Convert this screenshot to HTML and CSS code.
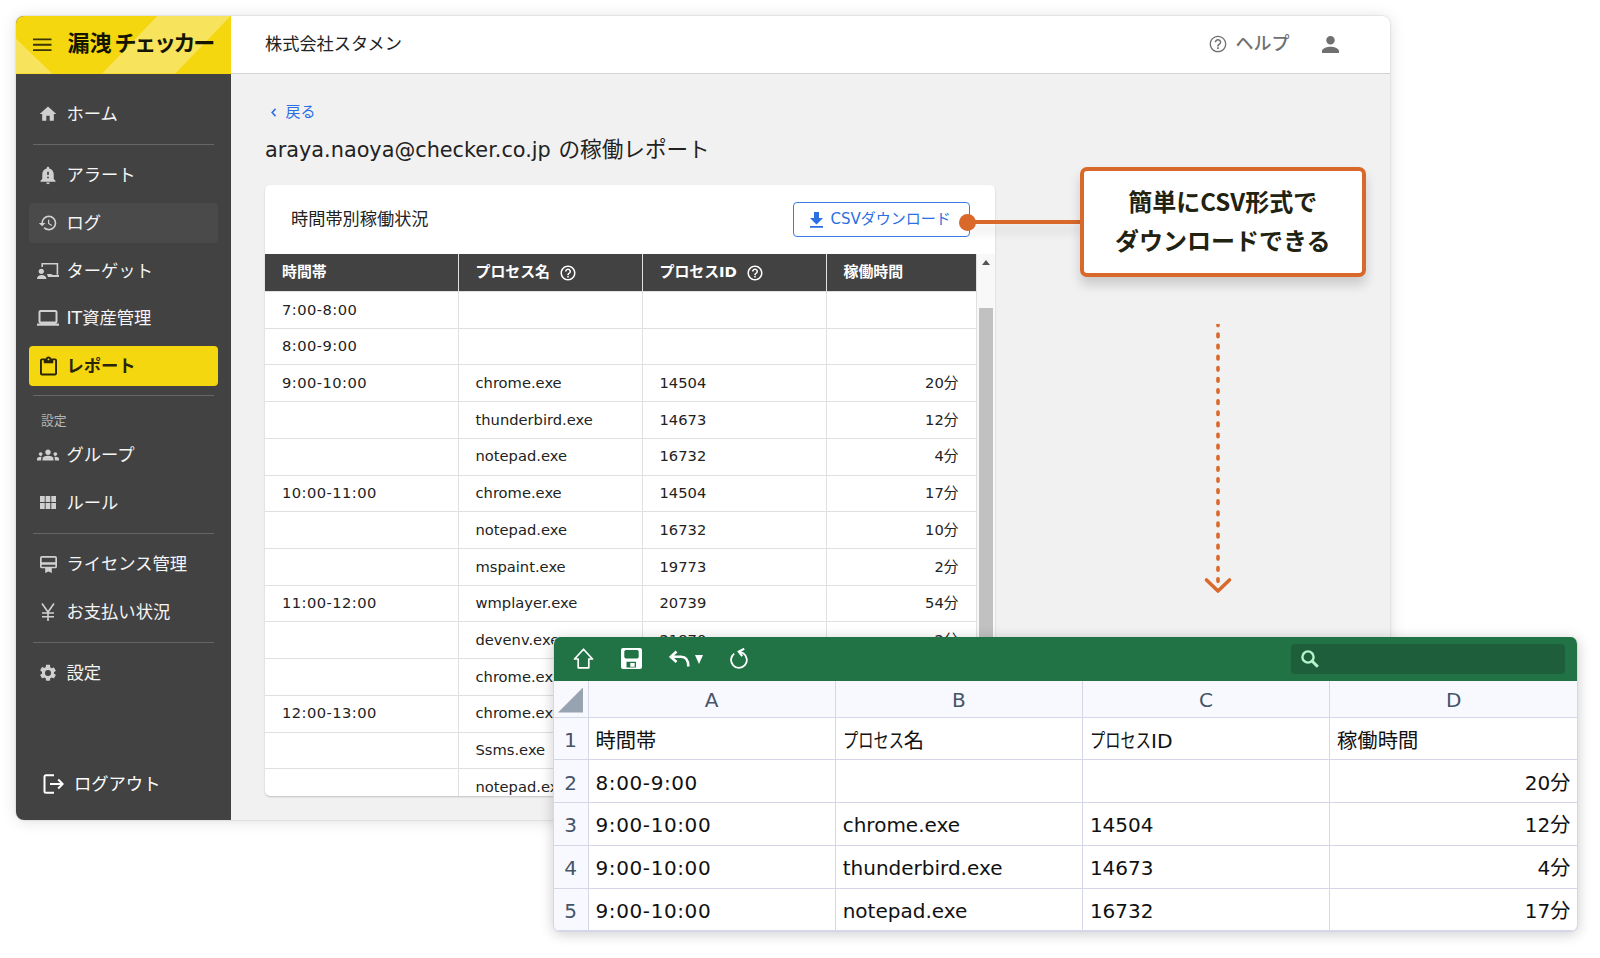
FILE: index.html
```html
<!DOCTYPE html>
<html lang="ja">
<head>
    <meta charset="UTF-8">
    <title>漏洩チェッカー</title>
    <link rel="stylesheet" href="styles.css">
</head>
<body>
    <!-- App window -->
    <div class="app">
        <aside class="sidebar">
            <div class="brand">
                <svg class="brand-bg" viewBox="0 0 214 58" preserveAspectRatio="none">
                    <path d="M0 23L36 58H0zM141 0H214L159 58H86z" fill="#f7e35c"/>
                </svg>
                <svg class="menu-icon" viewBox="0 0 18 13"><path d="M0 1.2h18M0 6.5h18M0 11.8h18" stroke="#3a3606" stroke-width="1.8"/></svg>
                <span class="brand-name">漏洩<span class="brand-kana">チェッカー</span></span>
            </div>

            <nav class="menu">
                <a class="menu-item"><svg class="icon" viewBox="0 0 24 24"><path d="M10 20v-6h4v6h5v-8h3L12 3 2 12h3v8z"/></svg>ホーム</a>
                <hr class="line">
                <a class="menu-item"><svg class="icon" viewBox="0 0 24 24"><path d="M10.01 21.01c0 1.1.89 1.99 1.99 1.99s1.99-.89 1.99-1.99h-3.98zM18.88 16.82V11c0-3.25-2.25-5.97-5.29-6.69v-.72C13.59 2.71 12.88 2 12 2s-1.59.71-1.59 1.59v.72C7.37 5.03 5.12 7.75 5.12 11v5.82L3 18.94V20h18v-1.06l-2.12-2.12zM13 16.01h-2v-2h2v2zm0-4h-2V8h2v4.01z"/></svg>アラート</a>
                <a class="menu-item hovered"><svg class="icon" viewBox="0 0 24 24"><path d="M13 3a9 9 0 0 0-9 9H1l3.89 3.89.07.14L9 12H6c0-3.87 3.13-7 7-7s7 3.13 7 7-3.13 7-7 7c-1.93 0-3.68-.79-4.94-2.06l-1.42 1.42A8.954 8.954 0 0 0 13 21a9 9 0 0 0 0-18zm-1 5v5l4.28 2.54.72-1.21-3.5-2.08V8z"/></svg>ログ</a>
                <a class="menu-item"><svg class="icon icon-wide" viewBox="0 0 22 17"><path d="M5.2 4.500V1.200h15.200v11" fill="none" stroke="#d0d0d0" stroke-width="1.6"/><circle cx="4.3" cy="8.800" r="2.6"/><path d="M0 16.500c0-2.700 2-4 4.700-4s4.700 1.300 4.700 4zM10 11.500h4l2 .9h6v2.200H11z"/></svg>ターゲット</a>
                <a class="menu-item"><svg class="icon icon-wide" viewBox="0 0 22 17"><path d="M18.500 14a2 2 0 0 0 2-2V2.500a2 2 0 0 0-2-2h-15a2 2 0 0 0-2 2V12c0 1.100.9 2 2 2H0v2.200h22V14zM3.500 2.500h15V12h-15z"/></svg>IT資産管理</a>
                <a class="menu-item active"><svg class="icon icon-clip" viewBox="3 1 18 20"><path d="M19 3h-4.180C14.400 1.840 13.300 1 12 1s-2.400.84-2.820 2H5c-1.100 0-2 .9-2 2v14c0 1.100.9 2 2 2h14c1.100 0 2-.9 2-2V5c0-1.100-.9-2-2-2zm-7 0c.55 0 1 .45 1 1s-.45 1-1 1-1-.45-1-1 .45-1 1-1zm7 16H5V5h2v3h10V5h2v14z"/></svg>レポート</a>
                <hr class="line line-group">
                <p class="menu-label">設定</p>
                <a class="menu-item"><svg class="icon icon-wide" viewBox="0 5 24 14"><path d="M12 12.750c1.630 0 3.070.39 4.240.9 1.080.48 1.760 1.560 1.760 2.730V18H6v-1.610c0-1.180.68-2.260 1.760-2.730 1.170-.52 2.610-.91 4.240-.91zM4 13c1.100 0 2-.9 2-2s-.9-2-2-2-2 .9-2 2 .9 2 2 2zm1.130 1.100C4.760 14.040 4.390 14 4 14c-.99 0-1.930.21-2.780.58A2.010 2.010 0 0 0 0 16.430V18h4.500v-1.610c0-.83.23-1.610.63-2.290zM20 13c1.100 0 2-.9 2-2s-.9-2-2-2-2 .9-2 2 .9 2 2 2zm4 3.430c0-.81-.48-1.530-1.220-1.850A6.950 6.950 0 0 0 20 14c-.39 0-.76.04-1.130.1.4.68.63 1.460.63 2.290V18H24v-1.570zM12 6c1.660 0 3 1.340 3 3s-1.340 3-3 3-3-1.340-3-3 1.340-3 3-3z"/></svg>グループ</a>
                <a class="menu-item"><svg class="icon icon-grid" viewBox="0 0 16 13"><path d="M0 0h4.700v6H0zM5.600 0h4.700v6H5.600zM11.300 0H16v6h-4.700zM0 7h4.700v6H0zM5.600 7h4.700v6H5.600zM11.300 7H16v6h-4.700z"/></svg>ルール</a>
                <hr class="line">
                <a class="menu-item"><svg class="icon icon-card" viewBox="0 0 18 18"><path d="M2 0h14a2 2 0 0 1 2 2v9a2 2 0 0 1-2 2h-3.500v5L9 16.300 5.500 18v-5H2a2 2 0 0 1-2-2V2a2 2 0 0 1 2-2zm-.2 1.800v4.700h14.400V1.800zm0 7.500v2h14.400v-2z"/></svg>ライセンス管理</a>
                <a class="menu-item"><svg class="icon icon-yen" viewBox="0 0 14 18"><path d="M1 .5l6 8.500 6-8.500M7 9v9M1 10h12M1 13.800h12" fill="none" stroke="#d0d0d0" stroke-width="1.600"/></svg>お支払い状況</a>
                <hr class="line">
                <a class="menu-item"><svg class="icon" viewBox="0 0 24 24"><path d="M19.140 12.940c.04-.3.060-.61.060-.94 0-.32-.02-.64-.07-.94l2.030-1.580c.18-.14.23-.41.12-.61l-1.920-3.320c-.12-.22-.37-.29-.59-.22l-2.390.96c-.5-.38-1.030-.7-1.620-.94l-.36-2.540A.484.484 0 0 0 13.920 2h-3.840c-.24 0-.43.17-.47.41l-.36 2.540c-.59.24-1.130.57-1.620.94l-2.390-.96c-.22-.08-.47 0-.59.22L2.740 8.470c-.12.21-.08.47.12.61l2.030 1.580c-.05.3-.09.63-.09.94s.02.64.07.94l-2.030 1.580c-.18.14-.23.41-.12.61l1.920 3.320c.12.22.37.29.59.22l2.390-.96c.5.38 1.030.7 1.620.94l.36 2.540c.05.24.24.41.48.41h3.840c.24 0 .44-.17.47-.41l.36-2.540c.59-.24 1.130-.56 1.620-.94l2.390.96c.22.080.47 0 .59-.22l1.920-3.320c.12-.22.07-.47-.12-.61l-2.010-1.580zM12 15.600A3.600 3.600 0 1 1 12 8.400a3.600 3.600 0 0 1 0 7.200z"/></svg>設定</a>
            </nav>

            <a class="logout"><svg viewBox="0 0 21 20"><path d="M11 1.200H3a1.500 1.500 0 0 0-1.500 1.500v14.600A1.500 1.500 0 0 0 3 18.800h8M7 10h12.500M15.200 5.500l4.500 4.500-4.500 4.500" fill="none" stroke="#fff" stroke-width="2"/></svg>ログアウト</a>
        </aside>

        <div class="content">
            <header class="topbar">
                <span class="company">株式会社スタメン</span>
                <span class="help">
                    <svg viewBox="0 0 24 24"><path d="M11 18h2v-2h-2v2zm1-16C6.480 2 2 6.480 2 12s4.480 10 10 10 10-4.480 10-10S17.520 2 12 2zm0 18.400c-4.600 0-8.400-3.800-8.400-8.400S7.400 3.600 12 3.600s8.400 3.800 8.400 8.400-3.800 8.400-8.400 8.400zM12 6c-2.210 0-4 1.790-4 4h1.800c0-1.100 1.100-2.200 2.200-2.200s2.200 1 2.200 2.200c0 2-3.100 1.750-3.100 5h1.800c0-2.250 3.100-2.500 3.100-5 0-2.210-1.790-4-4-4z"/></svg>
                    <span>ヘルプ</span>
                </span>
                <svg class="user" viewBox="4 4 16 16"><path d="M12 12c2.210 0 4-1.790 4-4s-1.790-4-4-4-4 1.790-4 4 1.790 4 4 4zm0 2c-2.670 0-8 1.340-8 4v2h16v-2c0-2.660-5.330-4-8-4z"/></svg>
            </header>

            <main class="page">
                <a class="back"><svg viewBox="0 0 6 10"><path d="M5 1L1.200 5 5 9" fill="none" stroke="#2b6fe3" stroke-width="1.700"/></svg>戻る</a>
                <h1 class="page-title"><span class="mail">araya.naoya@checker.co.jp</span>の稼働レポート</h1>

                <section class="panel">
                    <div class="panel-head">
                        <h2>時間帯別稼働状況</h2>
                        <button class="csv-button"><svg viewBox="0 0 13 16"><path d="M4 0h5v6h4l-6.500 6.500L0 6h4zM0 14h13v1.800H0z"/></svg>CSVダウンロード</button>
                    </div>
                    <div class="panel-body">
                        <div class="report">
                            <div class="row row-head">
                                <div>時間帯</div>
                                <div>プロセス名<svg viewBox="0 0 24 24"><path d="M11 18h2v-2h-2v2zm1-16C6.480 2 2 6.480 2 12s4.480 10 10 10 10-4.480 10-10S17.520 2 12 2zm0 18c-4.410 0-8-3.590-8-8s3.590-8 8-8 8 3.590 8 8-3.590 8-8 8zm0-14c-2.210 0-4 1.790-4 4h2c0-1.100.9-2 2-2s2 .9 2 2c0 2-3 1.750-3 5h2c0-2.250 3-2.500 3-5 0-2.210-1.790-4-4-4z"/></svg></div>
                                <div>プロセスID<svg viewBox="0 0 24 24"><path d="M11 18h2v-2h-2v2zm1-16C6.480 2 2 6.480 2 12s4.480 10 10 10 10-4.480 10-10S17.520 2 12 2zm0 18c-4.410 0-8-3.590-8-8s3.590-8 8-8 8 3.590 8 8-3.590 8-8 8zm0-14c-2.210 0-4 1.790-4 4h2c0-1.100.9-2 2-2s2 .9 2 2c0 2-3 1.750-3 5h2c0-2.250 3-2.500 3-5 0-2.210-1.790-4-4-4z"/></svg></div>
                                <div>稼働時間</div>
                            </div>
                            <div class="row"><div class="time">7:00-8:00</div><div></div><div></div><div></div></div>
                            <div class="row"><div class="time">8:00-9:00</div><div></div><div></div><div></div></div>
                            <div class="row"><div class="time">9:00-10:00</div><div>chrome.exe</div><div>14504</div><div>20分</div></div>
                            <div class="row"><div></div><div>thunderbird.exe</div><div>14673</div><div>12分</div></div>
                            <div class="row"><div></div><div>notepad.exe</div><div>16732</div><div>4分</div></div>
                            <div class="row"><div class="time">10:00-11:00</div><div>chrome.exe</div><div>14504</div><div>17分</div></div>
                            <div class="row"><div></div><div>notepad.exe</div><div>16732</div><div>10分</div></div>
                            <div class="row"><div></div><div>mspaint.exe</div><div>19773</div><div>2分</div></div>
                            <div class="row"><div class="time">11:00-12:00</div><div>wmplayer.exe</div><div>20739</div><div>54分</div></div>
                            <div class="row"><div></div><div>devenv.exe</div><div>21870</div><div>2分</div></div>
                            <div class="row"><div></div><div>chrome.exe</div><div></div><div></div></div>
                            <div class="row"><div class="time">12:00-13:00</div><div>chrome.exe</div><div></div><div></div></div>
                            <div class="row"><div></div><div>Ssms.exe</div><div></div><div></div></div>
                            <div class="row"><div></div><div>notepad.exe</div><div></div><div></div></div>
                        </div>
                        <div class="scrollbar"><span class="scroll-up"></span><span class="scroll-thumb"></span></div>
                    </div>
                </section>
            </main>
        </div>
    </div>

    <!-- Callout with pointer to the download button -->
    <div class="pointer"></div>
    <div class="callout">簡単にCSV形式で<br>ダウンロードできる</div>
    <svg class="flow-arrow" viewBox="0 0 30 272">
        <path d="M15 -1V258" stroke-width="3.600" stroke-dasharray="2.600 8.520"/>
        <path d="M3.500 256L15 267L26.500 256" stroke-width="3.600"/>
    </svg>

    <!-- Spreadsheet window -->
    <div class="sheet">
        <div class="toolbar">
            <svg class="tool-home" viewBox="0 0 21 21"><path d="M10.500 1.200L19.500 11h-3.700v8.800H5.200V11H1.500z" fill="none" stroke="#fff" stroke-width="1.700" stroke-linejoin="round"/></svg>
            <svg class="tool-save" viewBox="0 0 21 21"><path fill="#fff" fill-rule="evenodd" d="M2 0h17a2 2 0 0 1 2 2v17a2 2 0 0 1-2 2H2a2 2 0 0 1-2-2V2a2 2 0 0 1 2-2zm2.500 2L3.300 3.200v6l1.200 1.200h12l1.200-1.200v-6L16.500 2zM5.500 13.800v5.700h9.500v-5.700zm3.800 1.200h4.400v3.700H9.300z"/></svg>
            <svg class="tool-undo" viewBox="0 0 34 18"><path d="M7.500 1.500L1.800 6.800l5.700 5.200M2 6.800h10c5 0 7.300 3.500 7.300 9.700" fill="none" stroke="#fff" stroke-width="2.600"/><path d="M26 5h8l-4 9z" fill="#fff"/></svg>
            <svg class="tool-redo" viewBox="0 0 18 21"><path d="M4.200 5.600A7.900 7.900 0 1 0 13.600 5.500L10 3.900" fill="none" stroke="#fff" stroke-width="1.800"/><path d="M14.200 .8L8.800 3.600l3.400 4.600" fill="none" stroke="#fff" stroke-width="2.200"/></svg>
            <div class="search"><svg viewBox="0 0 18 18"><circle cx="7" cy="7" r="5.600" fill="none" stroke="#b4f5cb" stroke-width="2.400"/><path d="M11 11l5.800 5.800" stroke="#b4f5cb" stroke-width="3"/></svg></div>
        </div>
        <div class="grid">
            <div class="sheet-row letters"><div class="num"><span class="corner"></span></div><div>A</div><div>B</div><div>C</div><div>D</div></div>
            <div class="sheet-row titles"><div class="num">1</div><div>時間帯</div><div><span class="tight">プロセス</span>名</div><div><span class="tight">プロセス</span>ID</div><div>稼働時間</div></div>
            <div class="sheet-row"><div class="num">2</div><div class="time">8:00-9:00</div><div></div><div></div><div>20分</div></div>
            <div class="sheet-row"><div class="num">3</div><div class="time">9:00-10:00</div><div>chrome.exe</div><div>14504</div><div>12分</div></div>
            <div class="sheet-row"><div class="num">4</div><div class="time">9:00-10:00</div><div>thunderbird.exe</div><div>14673</div><div>4分</div></div>
            <div class="sheet-row"><div class="num">5</div><div class="time">9:00-10:00</div><div>notepad.exe</div><div>16732</div><div>17分</div></div>
        </div>
    </div>
</body>
</html>
```
FILE: styles.css
```css
* {
    box-sizing: border-box;
}

body {
    margin: 0;
    width: 1600px;
    height: 958px;
    overflow: hidden;
    position: relative;
    background: #fff;
    color: #222;
    font-family: "DejaVu Sans", "Noto Sans CJK JP", sans-serif;
    line-height: 1.4;
}

h1, h2, p {
    margin: 0;
    font-weight: normal;
}

/* App window */
.app {
    display: flex;
    width: 1374px;
    height: 804px;
    margin: 16px 0 0 16px;
    border-radius: 8px;
    overflow: hidden;
    background: #f1f1f1;
    box-shadow: 0 0 2px rgba(0, 0, 0, 0.2), 0 1px 16px rgba(0, 0, 0, 0.13);
}

.sidebar {
    display: flex;
    flex-direction: column;
    width: 214.5px;
    background: #424242;
}

.brand {
    display: flex;
    align-items: center;
    position: relative;
    height: 57.5px;
    padding-left: 17px;
    background: #f4d70f;
}

.brand-bg {
    position: absolute;
    top: 0;
    left: 0;
    width: 100%;
    height: 100%;
}

.menu-icon {
    position: relative;
    width: 18.5px;
    height: 13.5px;
}

.brand-name {
    position: relative;
    margin-left: 16px;
    color: #141400;
    font-size: 22px;
    font-weight: 700;
    white-space: nowrap;
}

.brand-kana {
    margin-left: 3px;
    letter-spacing: -2.3px;
}

.menu {
    display: flex;
    flex-direction: column;
    gap: 8px;
    padding: 20.5px 12.5px 0;
}

.menu-item {
    display: flex;
    align-items: center;
    height: 39.8px;
    padding-left: 38px;
    position: relative;
    border-radius: 4px;
    color: #f5f5f5;
    font-size: 17.300px;
    white-space: nowrap;
}

.hovered {
    background: #4a4a4a;
}

.active {
    background: #f4d70f;
    color: #28250a;
    font-weight: 700;
}

/* icons sit in the left gutter of the item, centered on the same axis */
.icon {
    position: absolute;
    left: 9.500px;
    width: 20px;
    height: 20px;
    fill: #d0d0d0;
}

.icon-wide {
    left: 8.500px;
    width: 22px;
}

.icon-clip {
    left: 11px;
    width: 17px;
    height: 20px;
    fill: #28250a;
}

.icon-grid {
    left: 11.500px;
    width: 16px;
    height: 13px;
}

.icon-card {
    left: 11px;
    width: 17px;
    height: 17px;
}

.icon-yen {
    left: 12.500px;
    width: 14px;
    height: 18px;
}

.line {
    width: 181px;
    height: 1px;
    margin: 2.2px auto;
    border: none;
    background: #666;
}

.line-group {
    margin: 1px auto 0;
}

.menu-label {
    height: 24px;
    margin: 5px 0 -6px;
    padding-left: 12.500px;
    color: #b5b5b5;
    font-size: 12.800px;
    line-height: 24px;
}

.logout {
    display: flex;
    align-items: center;
    gap: 10.500px;
    height: 40px;
    margin: auto 0 16px 26.500px;
    color: #fff;
    font-size: 17.300px;
}

.logout svg {
    width: 21px;
    height: 20px;
}

.content {
    flex: 1;
    min-width: 0;
}

.topbar {
    display: flex;
    align-items: center;
    height: 58px;
    padding: 0 51.500px 1px 34.5px;
    border-bottom: 1px solid #d2d2d2;
    background: #fff;
}

.company {
    font-size: 17.200px;
}

.help {
    display: flex;
    align-items: center;
    gap: 8px;
    margin-left: auto;
    color: #707070;
    font-size: 18px;
    font-weight: 500;
}

.help svg {
    width: 20px;
    height: 20px;
    fill: #707070;
}

.user {
    width: 17px;
    height: 17px;
    margin: 1px 0 0 32px;
    fill: #707070;
}

.page {
    padding: 26px 0 0 34.500px;
}

.back {
    display: flex;
    align-items: center;
    gap: 9px;
    height: 24px;
    padding-left: 6px;
    color: #2b6fe3;
    font-size: 15px;
}

.back svg {
    width: 5.500px;
    height: 9px;
}

.page-title {
    height: 30px;
    margin-top: 11px;
    font-size: 21.600px;
    line-height: 30px;
    white-space: nowrap;
}

.mail {
    display: inline-block;
    width: 293.500px;
    font-size: 20.800px;
}

/* Report panel */
.panel {
    width: 730px;
    height: 611px;
    margin-top: 20px;
    border-radius: 5px;
    overflow: hidden;
    background: #fff;
    box-shadow: 0 1px 2px rgba(0, 0, 0, 0.2);
}

.panel-head {
    display: flex;
    justify-content: space-between;
    align-items: center;
    height: 69px;
    padding: 0 25.500px 0 26px;
}

.panel-head h2 {
    font-size: 17.200px;
}

.csv-button {
    display: flex;
    align-items: center;
    gap: 8px;
    width: 177px;
    height: 35px;
    padding: 0 0 0 16px;
    border: 1.500px solid #3c7be8;
    border-radius: 4px;
    background: #fff;
    color: #2b6fe3;
    font-family: inherit;
    font-size: 15px;
    line-height: 1.4;
    white-space: nowrap;
}

.csv-button svg {
    width: 13px;
    height: 16px;
    fill: #2b6fe3;
}

.panel-body {
    display: flex;
    height: 542px;
}

.report {
    width: 711.500px;
}

.row {
    display: grid;
    grid-template-columns: 193.500px 184px 184px 150px;
    height: 36.720px;
    border-bottom: 1px solid #e0e0e0;
    font-size: 14.700px;
}

.row > div {
    display: flex;
    align-items: center;
    padding-left: 17px;
    border-right: 1px solid #e0e0e0;
    white-space: nowrap;
}

.row > div:last-child {
    justify-content: flex-end;
    padding-right: 17px;
}

.time {
    letter-spacing: 0.030em;
}

.row-head {
    height: 38px;
    background: #424242;
    color: #fff;
    font-size: 14.900px;
    font-weight: 700;
}

.row-head > div:last-child {
    justify-content: flex-start;
}

.row-head svg {
    width: 18px;
    height: 18px;
    margin: 0 0 0 9px;
    fill: #fff;
}

.scrollbar {
    display: flex;
    flex-direction: column;
    align-items: center;
    flex: 1;
    background: #f8f8f8;
}

.scroll-up {
    margin-top: 6px;
    border: 4px solid transparent;
    border-top: none;
    border-bottom: 5px solid #555;
}

.scroll-thumb {
    width: 14px;
    height: 480px;
    margin-top: 43px;
    background: #c1c1c1;
}

/* Callout */
.pointer {
    position: absolute;
    left: 968px;
    top: 220px;
    width: 114px;
    height: 4px;
    background: #d9682b;
    box-shadow: 0 8px 10px rgba(0, 0, 0, 0.12);
}

.pointer::before {
    content: "";
    position: absolute;
    left: -9px;
    top: -6.500px;
    width: 17px;
    height: 17px;
    border-radius: 50%;
    background: #d9682b;
}

.callout {
    position: absolute;
    left: 1080px;
    top: 166.500px;
    width: 285.500px;
    height: 110.500px;
    padding-top: 10.500px;
    border: 4px solid #d9682b;
    border-radius: 7px;
    background: #fff;
    box-shadow: 0 8px 12px rgba(0, 0, 0, 0.16);
    color: #222211;
    font-family: "Noto Sans CJK JP", sans-serif;
    font-size: 24px;
    font-weight: 700;
    line-height: 39px;
    text-align: center;
}

.flow-arrow {
    position: absolute;
    left: 1202.500px;
    top: 324px;
    width: 30px;
    height: 272px;
    fill: none;
    stroke: #d9682b;
    stroke-linecap: round;
    stroke-linejoin: round;
}

/* Spreadsheet */
.sheet {
    position: absolute;
    left: 552.500px;
    top: 637px;
    width: 1025px;
    height: 294.500px;
    border: 1px solid #d5d6e8;
    border-top: none;
    border-radius: 7px;
    overflow: hidden;
    background: #fff;
    box-shadow: 0 2px 14px rgba(0, 0, 0, 0.2);
    color: #111;
}

.toolbar {
    display: flex;
    align-items: center;
    height: 43.500px;
    padding: 0 12px 0 19px;
    background: #217346;
}

.tool-home, .tool-save {
    width: 21px;
    height: 21px;
}

.tool-save {
    margin-left: 27px;
}

.tool-undo {
    width: 34px;
    height: 18px;
    margin-left: 27px;
}

.tool-redo {
    width: 18px;
    height: 21px;
    margin-left: 27px;
}

.search {
    display: flex;
    align-items: center;
    width: 274px;
    height: 30px;
    margin-left: auto;
    padding-left: 10px;
    border-radius: 4px;
    background: #1e5e3a;
}

.search svg {
    width: 18px;
    height: 18px;
}

.sheet-row {
    display: grid;
    grid-template-columns: 35px 247.200px 247.200px 247.200px 247.200px;
    height: 42.800px;
    border-bottom: 1.500px solid #d5d6e8;
    font-size: 20px;
}

.sheet-row > div {
    display: flex;
    align-items: center;
    padding: 3px 7px 0;
    border-right: 1.500px solid #d5d6e8;
    white-space: nowrap;
}

.sheet-row > div:last-child {
    justify-content: flex-end;
    border-right: none;
}

.sheet-row > .num {
    justify-content: center;
    padding: 3px 0 0;
    background: #f7f9fe;
    color: #465468;
}

.titles {
    font-size: 20.300px;
}

.titles > div:not(.num) {
    padding-top: 5px;
}

.titles > div:last-child {
    justify-content: flex-start;
}

.letters {
    height: 37px;
    background: #f7f9fe;
    color: #465468;
}

.letters > div, .letters > div:last-child {
    justify-content: center;
}

.corner {
    width: 25px;
    height: 25px;
    background: #98a3b2;
    clip-path: polygon(100% 0, 100% 100%, 0 100%);
}

/* narrow katakana */
.tight {
    margin-right: -20px;
    transform: scaleX(0.75);
    transform-origin: left;
}
```
